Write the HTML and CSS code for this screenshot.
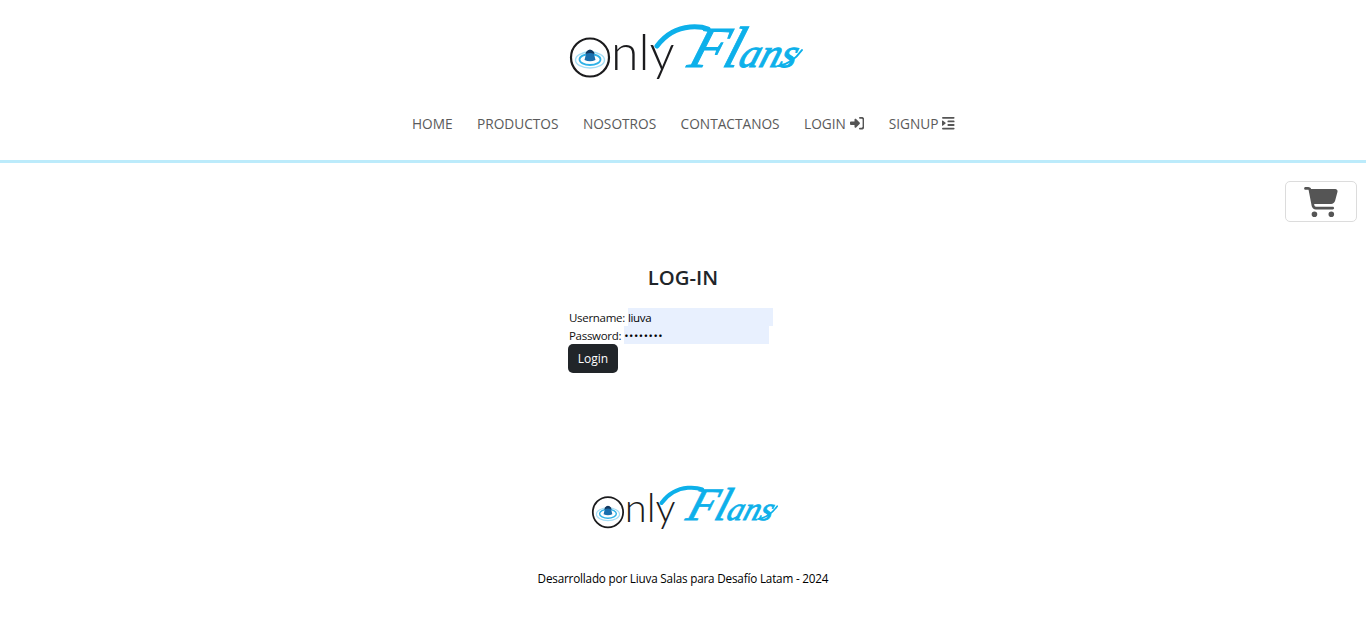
FILE: index.html
```html
<!DOCTYPE html>
<html lang="es">
<head>
<meta charset="utf-8">
<title>OnlyFlans</title>
<link rel="stylesheet" href="styles.css">
</head>
<body>
<header class="site-header">
  <a class="brand" href="#">
    <svg class="brand-logo" viewBox="0 0 233 62">
      <circle cx="20" cy="37.500" r="19" fill="none" stroke="#1b1b1d" stroke-width="2.200"/>
      <ellipse cx="20" cy="40" rx="14.500" ry="8" fill="none" stroke="#a5def6" stroke-width="1.400"/>
      <ellipse cx="20" cy="39.500" rx="10.500" ry="5.500" fill="none" stroke="#2fb2e8" stroke-width="1.800"/>
      <path d="M14.500 40l1.500-6q1-4 4-4t4 4l1.500 6q-5.500 2.500-11 0z" fill="#1a6fae"/>
      <path d="M16 32q4-5 8 0l.5 2q-4.500-2-9 0z" fill="#12385f"/>
      <text class="logo-nly" x="41" y="50">nly</text>
      <path class="logo-swash" d="M87 26C96 14 108 8 120 7C127 6.500 133 7 138 9"/>
      <text class="logo-flans" transform="translate(0 47) skewX(-18)"><tspan class="logo-cap" x="116" y="0">F</tspan><tspan class="logo-cap" x="151" y="0">l</tspan><tspan x="167" y="0">ans</tspan></text>
      <path class="logo-tail" d="M208 46Q222 44 232 30"/>
    </svg>
  </a>
  <nav class="main-nav">
    <a href="#">HOME</a>
    <a href="#">PRODUCTOS</a>
    <a href="#">NOSOTROS</a>
    <a href="#">CONTACTANOS</a>
    <a href="#">LOGIN
      <svg class="nav-icon nav-icon-login" viewBox="0 0 512 512"><path d="M217.900 105.900L340.700 228.700c7.200 7.200 11.300 17.100 11.300 27.300s-4.100 20.100-11.300 27.300L217.900 406.100c-6.400 6.400-15 9.900-24 9.900c-18.700 0-33.900-15.200-33.900-33.900l0-62.100L32 320c-17.700 0-32-14.300-32-32l0-64c0-17.700 14.300-32 32-32l128 0 0-62.100c0-18.700 15.200-33.900 33.900-33.900c9 0 17.600 3.600 24 9.900zM352 416l64 0c17.700 0 32-14.300 32-32l0-256c0-17.700-14.300-32-32-32l-64 0c-17.700 0-32-14.300-32-32s14.300-32 32-32l64 0c53 0 96 43 96 96l0 256c0 53-43 96-96 96l-64 0c-17.700 0-32-14.300-32-32s14.300-32 32-32z"/></svg></a>
    <a href="#">SIGNUP
      <svg class="nav-icon nav-icon-signup" viewBox="0 0 448 512"><path d="M0 64C0 46.300 14.300 32 32 32H416c17.700 0 32 14.300 32 32s-14.300 32-32 32H32C14.300 96 0 81.700 0 64zM192 192c0-17.700 14.300-32 32-32H416c17.700 0 32 14.300 32 32s-14.300 32-32 32H224c-17.700 0-32-14.300-32-32zm32 96H416c17.700 0 32 14.300 32 32s-14.300 32-32 32H224c-17.700 0-32-14.300-32-32s14.300-32 32-32zM0 448c0-17.700 14.300-32 32-32H416c17.700 0 32 14.300 32 32s-14.300 32-32 32H32c-17.700 0-32-14.300-32-32zM127.800 268.600L25.800 347.900C15.300 356.100 0 348.600 0 335.300V176.700c0-13.300 15.300-20.800 25.800-12.600l101.900 79.300c8.200 6.400 8.200 18.900 0 25.300z"/></svg></a>
  </nav>
</header>

<div class="cart-row">
  <button class="cart-btn" type="button" aria-label="Carrito">
    <svg class="cart-icon" viewBox="0 0 576 512"><path d="M0 24C0 10.700 10.700 0 24 0H69.500c22 0 41.500 12.800 50.600 32h411c26.300 0 45.500 25 38.600 50.400l-41 152.300c-8.500 31.400-37 53.300-69.500 53.300H170.700l5.400 28.500c2.200 11.300 12.100 19.500 23.600 19.500H488c13.300 0 24 10.700 24 24s-10.700 24-24 24H199.700c-34.600 0-64.300-24.600-70.700-58.500L77.400 54.500c-.7-3.800-4-6.500-7.900-6.500H24C10.700 48 0 37.300 0 24zM128 464a48 48 0 1 1 96 0 48 48 0 1 1 -96 0zm336-48a48 48 0 1 1 0 96 48 48 0 1 1 0-96z"/></svg>
  </button>
</div>

<main class="login">
  <h2 class="login-title">LOG-IN</h2>
  <form class="login-form">
    <div class="field"><label for="user">Username:</label> <input class="input" id="user" type="text" value="liuva"></div>
    <div class="field"><label for="pass">Password:</label> <input class="input input-pass" id="pass" type="password" value="liuva123"></div>
    <button class="login-btn" type="button">Login</button>
  </form>
</main>

<footer class="site-footer">
  <svg class="footer-logo" viewBox="0 0 233 62">
    <circle cx="20" cy="37.500" r="19" fill="none" stroke="#1b1b1d" stroke-width="2.200"/>
    <ellipse cx="20" cy="40" rx="14.500" ry="8" fill="none" stroke="#a5def6" stroke-width="1.400"/>
    <ellipse cx="20" cy="39.500" rx="10.500" ry="5.500" fill="none" stroke="#2fb2e8" stroke-width="1.800"/>
    <path d="M14.500 40l1.500-6q1-4 4-4t4 4l1.500 6q-5.500 2.500-11 0z" fill="#1a6fae"/>
    <path d="M16 32q4-5 8 0l.5 2q-4.500-2-9 0z" fill="#12385f"/>
    <text class="logo-nly" x="41" y="50">nly</text>
    <path class="logo-swash" d="M87 26C96 14 108 8 120 7C127 6.500 133 7 138 9"/>
    <text class="logo-flans" transform="translate(0 47) skewX(-18)"><tspan class="logo-cap" x="116" y="0">F</tspan><tspan class="logo-cap" x="151" y="0">l</tspan><tspan x="167" y="0">ans</tspan></text>
    <path class="logo-tail" d="M208 46Q222 44 232 30"/>
  </svg>
  <p class="credit">Desarrollado por Liuva Salas para Desafío Latam - 2024</p>
</footer>
</body>
</html>
```

FILE: styles.css
```css
* { box-sizing: border-box; }
html, body { margin: 0; padding: 0; }
body {
  font-family: "Open Sans", "Noto Sans", sans-serif;
  font-size: 12px;
  color: #212529;
  background: #fff;
  overflow: hidden;
}

.site-header {
  height: 163px;
  border-bottom: 3px solid #bcebfb;
  display: flex;
  flex-direction: column;
  align-items: center;
  padding-top: 20px;
}
.brand { display: block; height: 60px; width: 233px; }
.brand-logo { width: 233px; height: 62px; display: block; margin-left: 3px; overflow: visible; }

.logo-nly {
  font-family: "Lato", sans-serif;
  font-weight: 300;
  font-size: 50px;
  fill: #1b1b1d;
}
.logo-flans {
  font-family: "Liberation Serif", serif;
  font-style: italic;
  font-weight: 400;
  font-size: 41px;
  fill: #0db0ea;
  stroke: #0db0ea;
  stroke-width: 1px;
}
.logo-cap { font-size: 58px; }
.logo-swash {
  fill: none;
  stroke: #0db0ea;
  stroke-width: 5;
  stroke-linecap: round;
}
.logo-tail {
  fill: none;
  stroke: #0db0ea;
  stroke-width: 2;
  stroke-linecap: round;
}

.main-nav {
  display: flex;
  gap: 24.400px;
  margin-top: 33px;
  margin-left: 1px;
  align-items: center;
  height: 20px;
}
.main-nav a {
  color: #5a5a5a;
  text-decoration: none;
  font-size: 13.700px;
  white-space: nowrap;
  display: flex;
  align-items: center;
  gap: 4px;
}
.nav-icon { height: 14.400px; fill: #555; display: block; }
.nav-icon-login { width: 14.400px; }
.nav-icon-signup { width: 12.600px; }

.cart-row {
  display: flex;
  justify-content: flex-end;
  padding: 18px 9px 0 0;
}
.cart-btn {
  width: 72px;
  height: 41px;
  background: #fff;
  border: 1px solid #dcdcdc;
  border-radius: 5px;
  padding: 0;
  display: flex;
  align-items: center;
  justify-content: center;
}
.cart-icon { width: 34px; height: 30px; fill: #555; display: block; }

.login {
  display: flex;
  flex-direction: column;
  align-items: center;
  padding-top: 42px;
}
.login-title {
  margin: 0;
  font-size: 20.300px;
  line-height: 26px;
  font-weight: 600;
  color: #212529;
}
.login-form {
  width: 230px;
  margin-top: 18px;
  display: flex;
  flex-direction: column;
  align-items: flex-start;
}
.field {
  height: 18px;
  display: flex;
  align-items: center;
  gap: 3px;
  padding-left: 1px;
  color: #111;
  font-size: 11.500px;
  letter-spacing: -0.3px;
}
.input {
  width: 145px;
  height: 18px;
  border: 0;
  padding: 0;
  background: #e8f0fe;
  font: inherit;
  letter-spacing: inherit;
  color: #000;
  outline: none;
}
.input-pass { letter-spacing: 0.55px; }
.login-btn {
  width: 50px;
  height: 29px;
  background: #212529;
  color: #fff;
  border: 0;
  border-radius: 5px;
  font: inherit;
  padding: 0;
}

.site-footer {
  display: flex;
  flex-direction: column;
  align-items: center;
  padding-top: 109px;
}
.footer-logo { width: 186px; height: 50px; display: block; margin-left: 3px; overflow: visible; }
.credit {
  margin: 38px 0 0;
  font-size: 11.700px;
  letter-spacing: -0.18px;
  line-height: 16px;
  color: #000;
}
```
